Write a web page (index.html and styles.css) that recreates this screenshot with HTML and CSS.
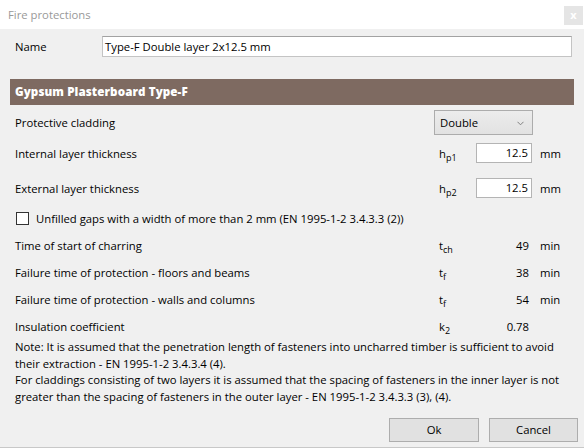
FILE: index.html
```html
<!DOCTYPE html>
<html>
<head>
<meta charset="utf-8">
<link rel="stylesheet" href="styles.css">
</head>
<body>
<div class="window">
  <div class="titlebar">
    <span class="title">Fire protections</span>
    <span class="close">x</span>
  </div>
  <div class="name-row">
    <span class="name-label">Name</span>
    <div class="textbox name-box">Type-F Double layer 2x12.5 mm</div>
  </div>
  <div class="section-header">Gypsum Plasterboard Type-F</div>
  <div class="params">
    <div class="row row-select">
      <span class="label">Protective cladding</span>
      <div class="select">
        <span>Double</span>
        <svg class="chev" width="7" height="5" viewBox="0 0 7 5"><path d="M0.5 0.8 L3.5 3.8 L6.5 0.8" fill="none" stroke="#808080" stroke-width="1"/></svg>
      </div>
    </div>
    <div class="row row-int">
      <span class="label">Internal layer thickness</span>
      <span class="sym">h<span class="sub">p1</span></span>
      <div class="textbox num">12.5</div>
      <span class="unit">mm</span>
    </div>
    <div class="row row-ext">
      <span class="label">External layer thickness</span>
      <span class="sym">h<span class="sub">p2</span></span>
      <div class="textbox num">12.5</div>
      <span class="unit">mm</span>
    </div>
    <div class="row row-check">
      <span class="checkbox"></span>
      <span class="check-text">Unfilled gaps with a width of more than 2 mm (EN 1995-1-2 3.4.3.3 (2))</span>
    </div>
    <div class="row row-val first-val">
      <span class="label">Time of start of charring</span>
      <span class="sym">t<span class="sub">ch</span></span>
      <span class="value">49</span>
      <span class="unit">min</span>
    </div>
    <div class="row row-val">
      <span class="label">Failure time of protection - floors and beams</span>
      <span class="sym">t<span class="sub">f</span></span>
      <span class="value">38</span>
      <span class="unit">min</span>
    </div>
    <div class="row row-val">
      <span class="label">Failure time of protection - walls and columns</span>
      <span class="sym">t<span class="sub">f</span></span>
      <span class="value">54</span>
      <span class="unit">min</span>
    </div>
    <div class="row row-val">
      <span class="label">Insulation coefficient</span>
      <span class="sym">k<span class="sub">2</span></span>
      <span class="value">0.78</span>
      <span class="unit"></span>
    </div>
  </div>
  <div class="note">
    Note: It is assumed that the penetration length of fasteners into uncharred timber is sufficient to avoid<br>
    their extraction - EN 1995-1-2 3.4.3.4 (4).<br>
    For claddings consisting of two layers it is assumed that the spacing of fasteners in the inner layer is not<br>
    greater than the spacing of fasteners in the outer layer - EN 1995-1-2 3.4.3.3 (3), (4).
  </div>
  <div class="buttons">
    <div class="btn btn-ok">Ok</div>
    <div class="btn btn-cancel">Cancel</div>
  </div>
</div>
</body>
</html>
```

FILE: styles.css
```css
* { box-sizing: border-box; }
html, body { margin: 0; padding: 0; }
body {
  width: 584px;
  height: 448px;
  overflow: hidden;
  background: #f0f0f0;
  font-family: "Open Sans", "Noto Sans", sans-serif;
  font-size: 11.3px;
  color: #000;
}
.window {
  width: 584px;
  height: 448px;
  background: #f0f0f0;
  border-bottom: 1px solid #c8c8c8;
  display: flex;
  flex-direction: column;
}
.titlebar {
  height: 29px;
  flex: none;
  background: #fff;
  display: flex;
  align-items: flex-start;
  padding-left: 8px;
}
.title {
  color: #999;
  line-height: 29px;
}
.close {
  margin-left: auto;
  margin-top: 6px;
  margin-right: 1px;
  width: 19px;
  height: 19px;
  background: #e5e5e5;
  color: #fff;
  font-size: 11px;
  font-weight: bold;
  line-height: 17px;
  text-align: center;
}
.name-row {
  display: flex;
  align-items: center;
  margin-top: 7px;
  padding-left: 15px;
  height: 21px;
}
.name-label { width: 87px; }
.textbox {
  background: #fff;
  border: 1px solid #c4c4c4;
}
.name-box {
  width: 470px;
  height: 21px;
  border-top-color: #a2a2a2;
  padding-left: 2px;
  line-height: 19px;
}
.section-header {
  margin: 22px 0 0 10px;
  width: 564px;
  height: 26px;
  flex: none;
  background: #7e6a61;
  color: #fff;
  font-size: 11.6px;
  font-weight: 800;
  letter-spacing: 0.1px;
  line-height: 26px;
  padding-left: 5px;
}
.params {
  padding-left: 15px;
  width: 574px;
  display: flex;
  flex-direction: column;
}
.row {
  display: flex;
  align-items: center;
}
.label { flex: 1; }
.row-select { margin-top: 5px; height: 25px; }
.select {
  width: 99px;
  height: 25px;
  margin-right: 41px;
  border: 1px solid #acacac;
  background: linear-gradient(#ececec, #e2e2e2);
  display: flex;
  align-items: center;
  justify-content: space-between;
  padding: 0 8px 0 5px;
}
.chev { margin-top: 1px; }
.row-int { margin-top: 8px; height: 20px; }
.row-ext { margin-top: 15px; height: 20px; }
.sym { width: 37px; padding-left: 0; }
.sub { font-size: 9px; position: relative; top: 3px; }
.num, .value {
  width: 56px;
  text-align: right;
  padding-right: 3px;
}
.num { height: 20px; line-height: 18px; border-color: #b4b4b4; }
.unit { width: 42px; padding-left: 8px; }
.row-check { margin-top: 13px; height: 14px; }
.checkbox {
  width: 13px;
  height: 13px;
  margin-left: 1px;
  border: 1px solid #333;
  background: #fff;
}
.check-text { margin-left: 7px; }
.row-val { height: 27px; }
.first-val { margin-top: 7px; }
.note {
  margin-top: -1px;
  padding: 0 15px;
  line-height: 16.5px;
}
.buttons {
  display: flex;
  justify-content: flex-end;
  gap: 10px;
  padding-right: 6px;
  margin-top: 13px;
}
.btn {
  height: 24px;
  background: #e1e1e1;
  border: 1px solid #adadad;
  text-align: center;
  line-height: 22px;
}
.btn-ok { width: 90px; }
.btn-cancel { width: 89px; }
```
